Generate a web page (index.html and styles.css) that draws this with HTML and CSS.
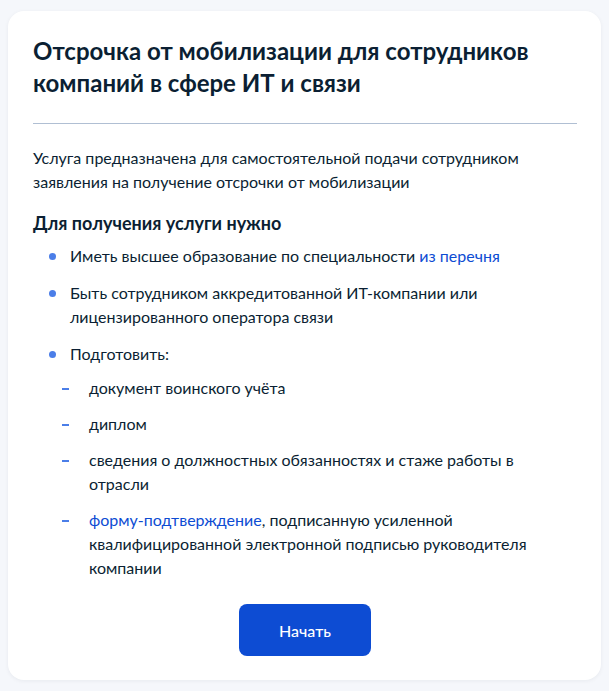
FILE: index.html
```html
<!DOCTYPE html>
<html lang="ru">
<head>
    <meta charset="UTF-8">
    <meta name="viewport" content="width=device-width, initial-scale=1.0">
    <title>Отсрочка от мобилизации</title>
    <link rel="stylesheet" href="styles.css">
</head>
<body>
    <div class="card">
        <h1 class="card-title">Отсрочка от мобилизации для сотрудников компаний в сфере ИТ и связи</h1>
        <hr class="divider">
        <p class="lead">Услуга предназначена для самостоятельной подачи сотрудником заявления на получение отсрочки от мобилизации</p>

        <h2 class="subtitle">Для получения услуги нужно</h2>
        <ul class="dots">
            <li>Иметь высшее образование по специальности <a href="#">из перечня</a></li>
            <li>Быть сотрудником аккредитованной ИТ-компании или лицензированного оператора связи</li>
            <li>
                Подготовить:
                <ul class="dashes">
                    <li>документ воинского учёта</li>
                    <li>диплом</li>
                    <li>сведения о должностных обязанностях и стаже работы в отрасли</li>
                    <li><a href="#">форму-подтверждение</a>, подписанную усиленной квалифицированной электронной подписью руководителя компании</li>
                </ul>
            </li>
        </ul>

        <div class="actions">
            <button type="button" class="btn">Начать</button>
        </div>
    </div>
</body>
</html>
```

FILE: styles.css
```css
body {
    margin: 0;
    padding: 11px 8px;
    background-color: #f5f7fb;
    font-family: Lato, "Noto Sans", sans-serif;
    color: #0b1f33;
}

.card {
    background: #fff;
    border-radius: 16px;
    padding: 24px 24px 24px 25px;
    box-shadow: 0 1px 4px rgba(11, 31, 51, 0.06);
}

.card-title {
    margin: 0;
    font-size: 24px;
    line-height: 32px;
    font-weight: 700;
    padding-right: 40px;
}

.divider {
    border: none;
    height: 1px;
    background-color: #b0bfd3;
    margin: 24px 0 22px;
}

.lead {
    margin: 0;
    font-size: 16px;
    line-height: 24px;
}

.subtitle {
    margin: 17px 0 9px;
    font-size: 18px;
    line-height: 24px;
    font-weight: 700;
}

a {
    color: #0d4cd3;
    text-decoration: none;
}

ul {
    list-style: none;
    margin: 0;
    padding: 0;
}

.dots > li {
    position: relative;
    padding-left: 37px;
    font-size: 16px;
    line-height: 24px;
    margin-bottom: 13px;
}

    .dots > li::before {
        content: "";
        position: absolute;
        left: 16px;
        top: 9px;
        width: 7px;
        height: 7px;
        border-radius: 50%;
        background-color: #4b7ee8;
    }

.dashes {
    margin-top: 10px;
}

    .dashes > li {
        position: relative;
        padding-left: 19px;
        margin-bottom: 12px;
    }

        .dashes > li::before {
            content: "";
            position: absolute;
            left: -8px;
            top: 12px;
            width: 7px;
            height: 2px;
            background-color: #4b7ee8;
        }

        .dashes > li:last-child {
            margin-bottom: 0;
        }

.actions {
    display: flex;
    justify-content: center;
    margin-top: 24px;
}

.btn {
    width: 132px;
    height: 52px;
    border: none;
    border-radius: 8px;
    background-color: #0d4cd3;
    color: #fff;
    font-family: Lato, "Noto Sans", sans-serif;
    font-size: 16px;
    font-weight: 500;
    cursor: pointer;
}
```
